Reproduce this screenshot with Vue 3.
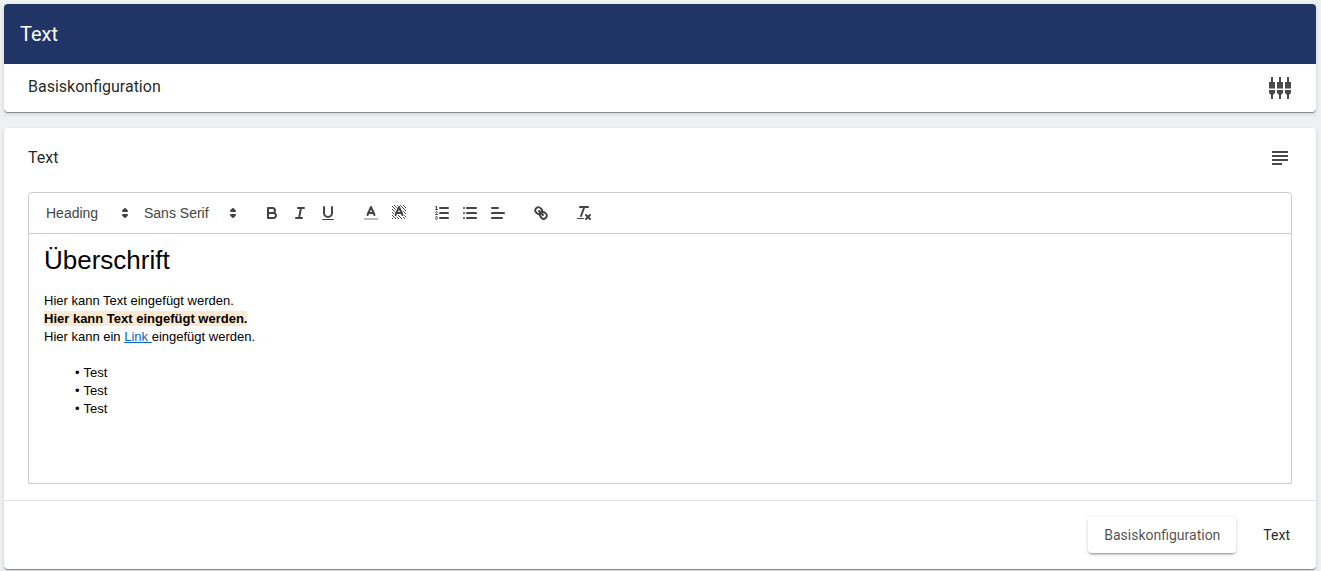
<script setup>
const bullets = ['Test', 'Test', 'Test']
</script>

<template>
  <div class="page">
    <section class="card top-card">
      <header class="title-bar">Text</header>
      <div class="row-head">
        <span class="row-title">Basiskonfiguration</span>
        <svg class="tune" width="24" height="24" viewBox="0 0 24 24">
          <g fill="#4a4a4a">
            <path d="M3 1h2v5h2v6.500H1V6h2zM1 14h6v3L5 19v4H3v-4L1 17z" />
            <path d="M11 1h2v5h2v6.500H9V6h2zM9 14h6v3l-2 2v4h-2v-4L9 17z" />
            <path d="M19 1h2v5h2v6.500h-6V6h2zM17 14h6v3l-2 2v4h-2v-4l-2-2z" />
          </g>
        </svg>
      </div>
    </section>

    <section class="card main-card">
      <div class="row-head editor-head">
        <span class="editor-title">Text</span>
        <svg width="24" height="24" viewBox="0 0 24 24"><path fill="#4a4a4a" d="M14 17H4v2h10v-2zm6-8H4v2h16V9zM4 15h16v-2H4v2zM4 5v2h16V5H4z" /></svg>
      </div>

      <div class="editor">
        <div class="toolbar">
          <span class="group pickers">
            <span class="picker first">Heading
              <svg class="arrows" viewBox="0 0 18 18"><polygon points="7 11 9 13 11 11 7 11" /><polygon points="7 7 9 5 11 7 7 7" /></svg>
            </span>
            <span class="picker second">Sans Serif
              <svg class="arrows" viewBox="0 0 18 18"><polygon points="7 11 9 13 11 11 7 11" /><polygon points="7 7 9 5 11 7 7 7" /></svg>
            </span>
          </span>
          <span class="group">
            <button class="tool"><svg viewBox="0 0 18 18"><path class="s" d="M5,4H9.500A2.500,2.500,0,0,1,12,6.500v0A2.500,2.500,0,0,1,9.500,9H5A0,0,0,0,1,5,9V4A0,0,0,0,1,5,4Z" /><path class="s" d="M5,9h5.500A2.500,2.500,0,0,1,13,11.500v0A2.500,2.500,0,0,1,10.500,14H5a0,0,0,0,1,0,0V9A0,0,0,0,1,5,9Z" /></svg></button>
            <button class="tool"><svg viewBox="0 0 18 18"><line class="s" x1="7" x2="13" y1="4" y2="4" /><line class="s" x1="5" x2="11" y1="14" y2="14" /><line class="s" x1="8" x2="10" y1="14" y2="4" /></svg></button>
            <button class="tool"><svg viewBox="0 0 18 18"><path class="s" d="M5,3V9a4.012,4.012,0,0,0,4,4H9a4.012,4.012,0,0,0,4-4V3" /><rect class="f" height="1" rx=".5" ry=".5" width="12" x="3" y="15" /></svg></button>
          </span>
          <span class="group">
            <button class="tool"><svg viewBox="0 0 18 18"><line class="label" x1="3" x2="15" y1="15" y2="15" /><polyline class="s" points="5.500 11 9 3 12.500 11" /><line class="s" x1="11.630" x2="6.380" y1="9" y2="9" /></svg></button>
            <button class="tool"><svg viewBox="0 0 18 18">
              <defs><pattern id="dots" width="3" height="3" patternUnits="userSpaceOnUse"><rect width="1" height="1" fill="#444" /><rect x="1" y="1" width="1" height="1" fill="#444" /><rect x="2" y="2" width="1" height="1" fill="#444" /></pattern></defs>
              <rect x="2" y="1" width="14" height="14" fill="url(#dots)" />
              <polyline class="halo" points="5.500 11 9 3 12.500 11" /><line class="halo" x1="11.630" x2="6.380" y1="9" y2="9" />
              <polyline class="s" points="5.500 11 9 3 12.500 11" /><line class="s" x1="11.630" x2="6.380" y1="9" y2="9" /></svg></button>
          </span>
          <span class="group">
            <button class="tool"><svg viewBox="0 0 18 18"><line class="s" x1="7" x2="15" y1="4" y2="4" /><line class="s" x1="7" x2="15" y1="9" y2="9" /><line class="s" x1="7" x2="15" y1="14" y2="14" /><line class="t" x1="2.500" x2="4.500" y1="5.500" y2="5.500" /><path class="f" d="M3.500,6A0.500,0.500,0,0,1,3,5.500V3.085l-0.276.138A0.500,0.500,0,0,1,2.053,3c-0.124-.247-0.023-0.324.224-0.447l1-.5A0.500,0.500,0,0,1,4,2.500v3A0.500,0.500,0,0,1,3.500,6Z" /><path class="t" d="M4.500,10.500h-2c0-.234,1.850-1.076,1.850-2.234A0.959,0.959,0,0,0,2.500,8.156" /><path class="t" d="M2.500,14.846a0.959,0.959,0,0,0,1.850-.109A0.700,0.700,0,0,0,3.750,14a0.688,0.688,0,0,0,.6-0.736,0.959,0.959,0,0,0-1.850-.109" /></svg></button>
            <button class="tool"><svg viewBox="0 0 18 18"><line class="s" x1="6" x2="15" y1="4" y2="4" /><line class="s" x1="6" x2="15" y1="9" y2="9" /><line class="s" x1="6" x2="15" y1="14" y2="14" /><line class="s" x1="3" x2="3" y1="4" y2="4" /><line class="s" x1="3" x2="3" y1="9" y2="9" /><line class="s" x1="3" x2="3" y1="14" y2="14" /></svg></button>
            <button class="tool"><svg viewBox="0 0 18 18"><line class="s" x1="3" x2="15" y1="9" y2="9" /><line class="s" x1="3" x2="13" y1="14" y2="14" /><line class="s" x1="3" x2="9" y1="4" y2="4" /></svg></button>
          </span>
          <span class="group">
            <button class="tool"><svg viewBox="0 0 18 18"><line class="s" x1="7" x2="11" y1="7" y2="11" /><path class="s" d="M8.900,4.577a3.476,3.476,0,0,1,.36,4.679A3.476,3.476,0,0,1,4.577,8.900C3.185,7.500,2.035,6.400,4.217,4.217S7.500,3.185,8.900,4.577Z" /><path class="s" d="M13.423,9.100a3.476,3.476,0,0,0-4.679-.36,3.476,3.476,0,0,0,.36,4.679c1.392,1.392,2.500,2.542,4.679.36S14.815,10.500,13.423,9.100Z" /></svg></button>
          </span>
          <span class="group">
            <button class="tool"><svg viewBox="0 0 18 18"><line class="s" x1="5" x2="13" y1="3" y2="3" /><line class="s" x1="6" x2="9.350" y1="12" y2="3" /><line class="s" x1="11" x2="15" y1="11" y2="15" /><line class="s" x1="15" x2="11" y1="11" y2="15" /><rect class="f" height="1" rx=".5" ry=".5" width="7" x="2" y="14" /></svg></button>
          </span>
        </div>

        <div class="content">
          <h1>Überschrift</h1>
          <p class="spacer"></p>
          <p>Hier kann Text eingefügt werden.</p>
          <p><strong class="mark">Hier kann Text eingefügt werden.</strong></p>
          <p>Hier kann ein <a href="#">Link </a>eingefügt werden.</p>
          <ul>
            <li v-for="(b, i) in bullets" :key="i">{{ b }}</li>
          </ul>
        </div>
      </div>

      <footer class="actions">
        <button class="btn raised">Basiskonfiguration</button>
        <button class="btn flat">Text</button>
      </footer>
    </section>
  </div>
</template>

<style>
html, body { margin: 0; background: #eef0f1; }
</style>

<style scoped>
.page {
  box-sizing: border-box;
  width: 1321px;
  height: 571px;
  padding: 4px 5px 0 4px;
  display: flex;
  flex-direction: column;
  gap: 16px;
  font-family: Roboto, sans-serif;
  overflow: hidden;
}
.card {
  background: #fff;
  border-radius: 4px;
  box-shadow: 0 1px 0 rgba(0,0,0,.35), 0 2px 4px rgba(0,0,0,.14);
}
.title-bar {
  height: 60px;
  background: #203466;
  color: #fff;
  border-radius: 4px 4px 0 0;
  font-size: 20px;
  font-weight: 400;
  line-height: 60px;
  padding-left: 16px;
}
.row-head {
  height: 48px;
  display: flex;
  align-items: center;
  justify-content: space-between;
  padding: 0 24px;
}
.row-title {
  font-size: 16px;
  margin-bottom: 4px;
  color: rgba(0,0,0,.87);
}
.editor-head { height: 60px; }
.editor-title {
  font-size: 16px;
  margin-bottom: 1px;
  color: rgba(0,0,0,.87);
}
.editor {
  margin: 4px 24px 0;
  height: 292px;
  border: 1px solid #ccc;
  border-radius: 4px 4px 0 0;
  box-sizing: border-box;
  display: flex;
  flex-direction: column;
}
.toolbar {
  box-sizing: border-box;
  height: 41px;
  padding: 8px;
  border-bottom: 1px solid #ccc;
  display: flex;
  font-family: "Liberation Sans", Arial, sans-serif;
}
.group {
  display: flex;
  margin-right: 15px;
}
.pickers { gap: 1px; }
.picker {
  box-sizing: border-box;
  position: relative;
  width: 98px;
  height: 24px;
  padding-left: 8px;
  font-size: 14px;
  line-height: 24px;
  color: #444;
  font-weight: 400;
}
.picker.first { padding-left: 9px; }
.picker.second { width: 107px; }
.arrows {
  position: absolute;
  right: 1px;
  top: 3px;
  width: 18px;
  height: 18px;
  fill: #444;
  stroke: #444;
  stroke-width: 2;
  stroke-linejoin: round;
}
.tool {
  width: 28px;
  height: 24px;
  padding: 3px 5px;
  border: 0;
  background: none;
}
.tool svg { display: block; width: 18px; height: 18px; }
.s { fill: none; stroke: #444; stroke-width: 2; stroke-linecap: round; stroke-linejoin: round; }
.halo { fill: none; stroke: #fff; stroke-width: 4; stroke-linecap: round; stroke-linejoin: round; }
.t { fill: none; stroke: #444; stroke-width: 1; stroke-linecap: round; stroke-linejoin: round; }
.f { fill: #444; }
.label { stroke: #bbb; stroke-width: 2; stroke-linecap: square; fill: none; }
.content {
  flex: 1;
  min-height: 0;
  padding: 0 15px;
  font-family: "Liberation Sans", Arial, sans-serif;
  font-size: 13px;
  line-height: 18px;
  color: #000;
}
.content h1 {
  margin: 0;
  font-size: 26px;
  font-weight: 400;
  line-height: 52px;
}
.content p { margin: 0; }
.spacer { height: 6px; }
.mark { background: #fde9d0; }
.content a { color: #06c; }
.content ul {
  list-style: none;
  margin: 18px 0 0;
  padding: 0 0 0 31px;
}
.content li::before { content: "•"; margin-right: 4px; }
.actions {
  margin-top: 16px;
  height: 69px;
  border-top: 1px solid #e0e0e0;
  box-sizing: border-box;
  display: flex;
  justify-content: flex-end;
  align-items: flex-start;
  padding: 16px 10px 0 0;
  gap: 11px;
}
.btn {
  height: 36px;
  padding: 0 16px;
  border: 0;
  border-radius: 4px;
  font: 400 14px Roboto, sans-serif;
  background: #fff;
}
.raised {
  color: rgba(0,0,0,.7);
  box-shadow: 0 3px 1px -2px rgba(0,0,0,.2), 0 2px 2px 0 rgba(0,0,0,.14), 0 1px 5px 0 rgba(0,0,0,.12);
}
.flat { color: rgba(0,0,0,.87); }
</style>
